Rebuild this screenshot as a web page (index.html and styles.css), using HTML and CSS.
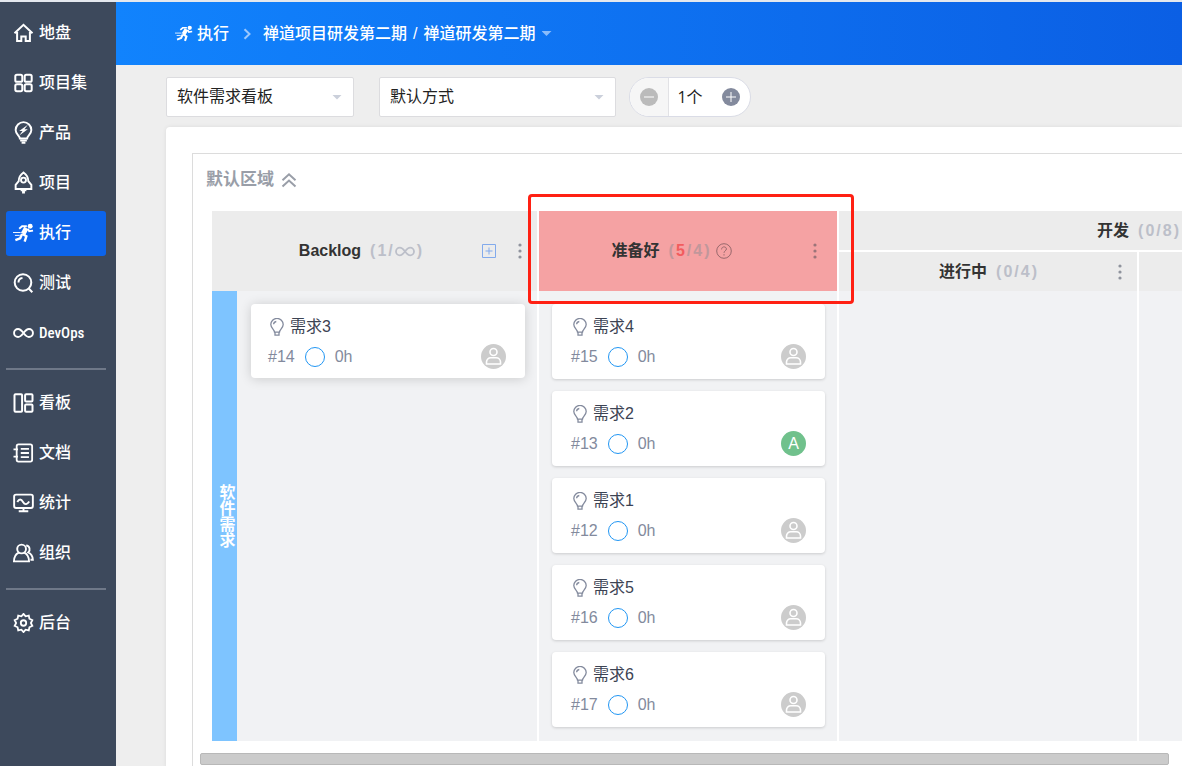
FILE: index.html
```html
<!DOCTYPE html>
<html lang="zh-CN">
<head>
    <meta charset="UTF-8">
    <meta name="viewport" content="width=device-width, initial-scale=1.0">
    <title>软件需求看板</title>
    <link rel="stylesheet" href="styles.css">
</head>
<body>
    <!-- Icon set -->
    <svg class="sprite" aria-hidden="true">
        <symbol id="i-home" viewBox="0 0 20 20"><path d="M1 10.2 10 1.8l9 8.4M3.6 9v9h4.2v-4.6h4.4V18h4.2V9"/></symbol>
        <symbol id="i-grid" viewBox="0 0 20 20"><rect x="1.8" y="1.8" width="7" height="7" rx="1.6"/><rect x="11.2" y="1.8" width="7" height="7" rx="1.6"/><rect x="1.8" y="11.2" width="7" height="7" rx="1.6"/><rect x="11.2" y="11.2" width="7" height="7" rx="1.6"/></symbol>
        <symbol id="i-product" viewBox="0 0 20 24"><path d="M6.2 18.2C6.2 15.5 1.8 14 1.8 9.4a8.2 8.2 0 0 1 16.4 0c0 4.600-4.400 6.100-4.400 8.800zM6.500 20.500h7M8 22.700h4"/><path class="solid" d="m14.500 4-9 6.500h3.500l-3.500 4.500 9-6.500h-3.500z"/></symbol>
        <symbol id="i-rocket" viewBox="0 0 20 24"><path d="M10 1.500C6.500 4 5 6.700 5 10.500L1.800 14.500v4.300H18.200v-4.300L15 10.500C15 6.700 13.500 4 10 1.500z"/><circle cx="10" cy="9.500" r="2.600"/><path class="solid" d="M7 18h6v3h-1.500v2.500h-3V21H7z"/></symbol>
        <symbol id="i-run" viewBox="0 0 22 20"><circle class="solid" cx="18" cy="3" r="2.600"/><path d="M6.500 5.500 9.500 3h5M15.500 5.500l1.500 2.700 4-.7"/><path class="torso" d="M14 4.800 10.500 11"/><path class="limb" d="m10 11 4 2.500-1.800 5.500M9.500 11 7.500 15.500 2.500 17.500"/><path class="thin" d="M0 9.500h8M2 12.500h5"/></symbol>
        <symbol id="i-search" viewBox="0 0 20 20"><circle cx="9.500" cy="9.500" r="8.300"/><path d="m14.800 15 4 4.200M5 9.500A4.500 4.500 0 0 1 9 5"/></symbol>
        <symbol id="i-loop" viewBox="0 0 22 12"><path d="M11 6C8.500 2.700 7.200 1.800 5.300 1.800a4.200 4.200 0 0 0 0 8.400C7.200 10.200 8.500 9.300 11 6s3.800-4.200 5.700-4.200a4.200 4.200 0 0 1 0 8.400C14.800 10.200 13.500 9.300 11 6z"/></symbol>
        <symbol id="i-kanban" viewBox="0 0 20 20"><rect x="1" y="1.200" width="7.600" height="17.600" rx="1"/><rect x="11.600" y="1.200" width="7.400" height="7.300" rx="1"/><rect x="11.600" y="11.500" width="7.400" height="7.300" rx="1"/></symbol>
        <symbol id="i-doc" viewBox="0 0 22 22"><rect x="3.500" y="1.500" width="17" height="19" rx="2"/><path d="M0 7h5M0 15h5M8 6.500h9M8 11h9M8 15.500h9"/></symbol>
        <symbol id="i-stats" viewBox="0 0 22 20"><rect x="1.200" y="1.200" width="19.600" height="14" rx="2"/><path d="M4.500 9c2-3.500 4-3.500 6 0s4.500 2.500 6.500-.5M11 15v3M6 18.600h10"/></symbol>
        <symbol id="i-team" viewBox="0 0 22 20"><circle cx="9" cy="5.800" r="4.600"/><path d="M6 9.600C2.800 11.200 1 14 1 18.800h15.800c0-4.800-1.800-7.600-5-9.200M13.800 2.200c3.700.3 4.800 4.700 2.200 7.200 3 1.500 4.600 4 4.800 7.600h-2.500"/></symbol>
        <symbol id="i-gear" viewBox="0 0 22 22"><path d="m11 1 2.300 2.600 3.500-.700.700 3.400 3.200 1.600L19.100 11l1.600 3.100-3.200 1.600-.700 3.400-3.500-.700L11 21l-2.300-2.600-3.500.700-.7-3.400-3.200-1.600L2.900 11 1.300 7.900l3.200-1.600.7-3.400 3.500.7z"/><circle cx="11" cy="11" r="3"/></symbol>
        <symbol id="i-bulb" viewBox="0 0 14 18"><path d="M4.500 14.200C4.500 11.500.8 10 .8 6.600a6.200 6.200 0 0 1 12.400 0c0 3.400-3.700 4.900-3.700 7.600zM5 14.500v2.700h4v-2.700M3.600 6.300A3.200 3.200 0 0 1 6.300 3.500"/></symbol>
        <symbol id="i-user" viewBox="0 0 25 25"><circle cx="12.500" cy="8" r="3.500"/><path d="M5.500 20v-2a4.300 4.300 0 0 1 4.300-4.300h5.400a4.300 4.300 0 0 1 4.300 4.300v2z"/></symbol>
        <symbol id="i-dots" viewBox="0 0 4 16"><circle class="solid" cx="2" cy="2" r="1.600"/><circle class="solid" cx="2" cy="8" r="1.600"/><circle class="solid" cx="2" cy="14" r="1.600"/></symbol>
        <symbol id="i-plus" viewBox="0 0 16 16"><path d="M1.500 1.500h13v13h-13zM8 4.500v7M4.500 8h7"/></symbol>
        <symbol id="i-help" viewBox="0 0 16 16"><circle cx="8" cy="8" r="7.300"/><path d="M5.600 6.400C5.600 3 10.400 3.200 10.400 6c0 1.800-2.400 1.900-2.400 3.800M8 11.200v1.300"/></symbol>
        <symbol id="i-up" viewBox="0 0 16 16"><path d="m1.500 8.300 6.500-6 6.500 6M1.500 14.500l6.500-6 6.500 6"/></symbol>
        <symbol id="i-next" viewBox="0 0 8 12"><path d="m1.500 1.200 5 4.800-5 4.800"/></symbol>
    </svg>

    <div class="app">
        <nav class="sidebar">
            <a class="nav-item" href="#"><svg class="icon"><use href="#i-home"/></svg>地盘</a>
            <a class="nav-item" href="#"><svg class="icon"><use href="#i-grid"/></svg>项目集</a>
            <a class="nav-item" href="#"><svg class="icon tall"><use href="#i-product"/></svg>产品</a>
            <a class="nav-item" href="#"><svg class="icon tall"><use href="#i-rocket"/></svg>项目</a>
            <a class="nav-item active" href="#"><svg class="icon"><use href="#i-run"/></svg>执行</a>
            <a class="nav-item" href="#"><svg class="icon"><use href="#i-search"/></svg>测试</a>
            <a class="nav-item latin" href="#"><svg class="icon"><use href="#i-loop"/></svg>DevOps</a>
            <hr class="divider">
            <a class="nav-item" href="#"><svg class="icon"><use href="#i-kanban"/></svg>看板</a>
            <a class="nav-item" href="#"><svg class="icon"><use href="#i-doc"/></svg>文档</a>
            <a class="nav-item" href="#"><svg class="icon"><use href="#i-stats"/></svg>统计</a>
            <a class="nav-item" href="#"><svg class="icon"><use href="#i-team"/></svg>组织</a>
            <hr class="divider">
            <a class="nav-item" href="#"><svg class="icon"><use href="#i-gear"/></svg>后台</a>
        </nav>

        <div class="main">
            <header class="header">
                <a class="crumb" href="#"><svg class="crumb-icon"><use href="#i-run"/></svg>执行</a>
                <svg class="crumb-arrow"><use href="#i-next"/></svg>
                <button class="crumb-menu" type="button"><span>禅道项目研发第二期</span><span>/</span><span>禅道研发第二期</span><span class="caret"></span></button>
            </header>

            <div class="toolbar">
                <div class="picker">
                    <select class="picker-type" aria-label="看板类型">
                        <option>软件需求看板</option>
                    </select>
                    <span class="caret"></span>
                </div>
                <div class="picker">
                    <select class="picker-group" aria-label="分组方式">
                        <option>默认方式</option>
                    </select>
                    <span class="caret"></span>
                </div>
                <div class="stepper">
                    <button class="step" type="button" aria-label="减少" disabled><svg class="step-icon" viewBox="0 0 18 18"><circle cx="9" cy="9" r="9"/><path d="M4 9h10"/></svg></button>
                    <span class="step-value">1个</span>
                    <button class="step" type="button" aria-label="增加"><svg class="step-icon" viewBox="0 0 18 18"><circle cx="9" cy="9" r="9"/><path d="M4 9h10M9 4v10"/></svg></button>
                </div>
            </div>

            <main class="panel">
                <section class="region">
                    <h2 class="region-title">默认区域 <svg class="region-icon"><use href="#i-up"/></svg></h2>

                    <div class="board">
                        <div class="board-head">
                            <div class="col-head first">
                                <div class="col-title">Backlog
                                    <span class="count"><span>(</span><span>1</span><span>/</span><svg class="infinite"><use href="#i-loop"/></svg><span>)</span></span>
                                </div>
                                <button class="col-btn add" type="button" aria-label="添加"><svg><use href="#i-plus"/></svg></button>
                                <button class="col-btn" type="button" aria-label="更多"><svg class="dots"><use href="#i-dots"/></svg></button>
                            </div>
                            <div class="col-head over">
                                <div class="col-title">准备好
                                    <span class="count"><span>(</span><span class="exceed">5</span><span>/</span><span>4</span><span>)</span></span>
                                    <svg class="help"><use href="#i-help"/></svg>
                                </div>
                                <button class="col-btn" type="button" aria-label="更多"><svg class="dots"><use href="#i-dots"/></svg></button>
                                <div class="highlight"></div>
                            </div>
                            <div class="col-group">
                                <div class="col-head parent">
                                    <div class="col-title">开发
                                        <span class="count"><span>(</span><span>0</span><span>/</span><span>8</span><span>)</span></span>
                                    </div>
                                </div>
                                <div class="col-children">
                                    <div class="col-head">
                                        <div class="col-title">进行中
                                            <span class="count"><span>(</span><span>0</span><span>/</span><span>4</span><span>)</span></span>
                                        </div>
                                        <button class="col-btn" type="button" aria-label="更多"><svg class="dots"><use href="#i-dots"/></svg></button>
                                    </div>
                                    <div class="col-head"></div>
                                </div>
                            </div>
                        </div>

                        <div class="board-body">
                            <div class="lane">软件需求</div>
                            <div class="column">
                                <article class="card raised">
                                    <a class="card-title" href="#"><svg class="bulb"><use href="#i-bulb"/></svg>需求3</a>
                                    <div class="card-info"><span>#14</span><span class="ring"></span><span>0h</span><span class="avatar"><svg><use href="#i-user"/></svg></span></div>
                                </article>
                            </div>
                            <div class="column">
                                <article class="card">
                                    <a class="card-title" href="#"><svg class="bulb"><use href="#i-bulb"/></svg>需求4</a>
                                    <div class="card-info"><span>#15</span><span class="ring"></span><span>0h</span><span class="avatar"><svg><use href="#i-user"/></svg></span></div>
                                </article>
                                <article class="card">
                                    <a class="card-title" href="#"><svg class="bulb"><use href="#i-bulb"/></svg>需求2</a>
                                    <div class="card-info"><span>#13</span><span class="ring"></span><span>0h</span><span class="avatar green">A</span></div>
                                </article>
                                <article class="card">
                                    <a class="card-title" href="#"><svg class="bulb"><use href="#i-bulb"/></svg>需求1</a>
                                    <div class="card-info"><span>#12</span><span class="ring"></span><span>0h</span><span class="avatar"><svg><use href="#i-user"/></svg></span></div>
                                </article>
                                <article class="card">
                                    <a class="card-title" href="#"><svg class="bulb"><use href="#i-bulb"/></svg>需求5</a>
                                    <div class="card-info"><span>#16</span><span class="ring"></span><span>0h</span><span class="avatar"><svg><use href="#i-user"/></svg></span></div>
                                </article>
                                <article class="card">
                                    <a class="card-title" href="#"><svg class="bulb"><use href="#i-bulb"/></svg>需求6</a>
                                    <div class="card-info"><span>#17</span><span class="ring"></span><span>0h</span><span class="avatar"><svg><use href="#i-user"/></svg></span></div>
                                </article>
                            </div>
                            <div class="column"></div>
                            <div class="column"></div>
                        </div>
                    </div>
                    <div class="scrollbar"></div>
                </section>
            </main>
        </div>
    </div>
</body>
</html>
```

FILE: styles.css
```css
* {
    box-sizing: border-box;
}
body {
    margin: 0;
    border-top: 2px solid #e4e8ee;
    background-color: #eee;
    color: #3c4353;
    font: 16px/24px "Liberation Sans", "Noto Sans CJK SC", sans-serif;
    overflow: hidden;
}
a {
    color: inherit;
    text-decoration: none;
}
button {
    padding: 0;
    border: none;
    background: none;
    color: inherit;
    font: inherit;
}
svg {
    display: block;
    fill: none;
    stroke: currentColor;
    stroke-width: 2;
}
.sprite {
    position: absolute;
    width: 0;
    height: 0;
}
.solid {
    fill: currentColor;
    stroke: none;
}
.thin {
    stroke-width: 1;
}
.torso {
    stroke-width: 5;
}
.limb {
    stroke-width: 2.5;
}
.caret {
    width: 10px;
    height: 5px;
    background-color: #cbd0db;
    clip-path: polygon(0 0, 100% 0, 50% 100%);
}
.app {
    display: flex;
    min-height: 100vh;
}

/* Sidebar */
.sidebar {
    flex: none;
    width: 116px;
    padding: 9px 10px 0 6px;
    background-color: #3d495c;
    color: #fff;
}
.nav-item {
    display: flex;
    align-items: center;
    gap: 5px;
    height: 45px;
    margin-bottom: 5px;
    padding: 0 0 2px 7px;
    border-radius: 3px;
    font-weight: 500;
}
.nav-item.active {
    background-color: #0c64eb;
}
.nav-item.latin {
    font-family: "Liberation Sans Narrow", "Roboto Condensed", "Open Sans Condensed", Roboto, sans-serif;
    font-size: 15px;
}
.icon {
    flex: none;
    width: 21px;
    height: 20px;
}
.icon.tall {
    height: 23px;
}
.divider {
    height: 2px;
    margin: 12px 0 11px;
    border: none;
    background-color: #6f7888;
}

/* Header */
.main {
    flex: 1;
    min-width: 0;
    display: flex;
    flex-direction: column;
}
.header {
    display: flex;
    align-items: center;
    height: 63px;
    padding-left: 59px;
    background: linear-gradient(to right, #1183fd, #0b5fe4);
    color: #fff;
    font-weight: 500;
}
.crumb {
    display: flex;
    align-items: center;
    gap: 4px;
}
.crumb-icon {
    width: 18px;
    height: 17px;
}
.crumb-arrow {
    width: 8px;
    height: 12px;
    margin: 0 12px 0 14px;
    color: #9cc8fd;
}
.crumb-menu {
    display: flex;
    align-items: center;
    gap: 6px;
}
.crumb-menu .caret {
    background-color: #8abcfb;
}

/* Toolbar */
.toolbar {
    display: flex;
    padding: 12px 0 10px 50px;
    color: #222;
}
.picker {
    display: flex;
    align-items: center;
    margin-right: 25px;
    position: relative;
}
.picker + .picker {
    margin-right: 13px;
}
.picker select {
    appearance: none;
    height: 40px;
    padding: 0 24px 0 10px;
    border: 1px solid #dcdcdf;
    border-radius: 2px;
    background-color: #fff;
    color: inherit;
    font: inherit;
}
.picker-type {
    width: 188px;
}
.picker-group {
    width: 237px;
}
.picker .caret {
    position: absolute;
    right: 12px;
    pointer-events: none;
}
.stepper {
    display: flex;
    align-items: center;
    height: 40px;
    border: 1px solid #dadce6;
    border-radius: 20px;
    background-color: #fff;
    overflow: hidden;
}
.step {
    display: flex;
    align-items: center;
    justify-content: center;
    width: 39px;
    height: 100%;
    color: #838a9d;
}
.step:disabled {
    border-right: 1px solid #e2e2e5;
    background-color: #f6f6f6;
    color: #bbb;
}
.step-value {
    width: 42px;
    font-family: "Open Sans", "Noto Sans CJK SC", sans-serif;
    text-align: center;
}
.step-icon {
    width: 18px;
    height: 18px;
    stroke: #fff;
    stroke-width: 1;
}
.step-icon circle {
    fill: currentColor;
    stroke: none;
}

/* Board */
.panel {
    flex: 1;
    margin-left: 50px;
    padding: 26px 0 0 26px;
    border-top-left-radius: 4px;
    background-color: #fff;
    box-shadow: 0 0 4px rgba(0, 0, 0, 0.08);
}
.region {
    border: 1px solid #dcdcdc;
    border-width: 1px 0 0 1px;
    overflow: hidden;
}
.region-title {
    display: flex;
    align-items: center;
    gap: 7px;
    height: 50px;
    margin: 0;
    padding: 2px 0 0 13px;
    color: #999ea8;
    font-size: 17px;
}
.region-icon {
    width: 16px;
    height: 16px;
}
.board {
    width: max-content;
    padding: 7px 0 0 19px;
}
.board-head,
.board-body,
.col-children {
    display: flex;
}
.board-head {
    height: 80px;
}
.board-body {
    min-height: 450px;
}
.col-head {
    display: flex;
    align-items: center;
    width: 300px;
    padding-left: 34px;
    border-left: 2px solid #fff;
    background-color: #ececec;
}
.col-head.first {
    width: 325px;
    border-left: none;
}
.col-head.over {
    position: relative;
    padding: 0 5px 0 7px;
    background-color: #f5a2a3;
}
.col-group {
    display: flex;
    flex-direction: column;
    gap: 2px;
}
.col-group .col-head {
    height: 39px;
}
.col-head.parent {
    width: 600px;
    padding-left: 0;
}
.col-title {
    display: flex;
    align-items: center;
    justify-content: center;
    flex: 1;
    color: #333;
    font-weight: bold;
}
.count {
    display: flex;
    align-items: center;
    gap: 2px;
    margin-left: 9px;
    color: #bcbfc9;
}
.over .count {
    color: #c1979b;
}
.over .exceed {
    color: #f25c5e;
}
.infinite {
    width: 20px;
    height: 11px;
}
.help {
    width: 16px;
    height: 16px;
    margin-left: 7px;
    color: #98686c;
    stroke-width: 1;
}
.col-btn {
    display: flex;
    justify-content: center;
    width: 34px;
    color: #8f939d;
}
.col-btn.add {
    width: 28px;
    color: #82aaec;
}
.col-btn.add svg {
    width: 16px;
    height: 16px;
    stroke-width: 1;
}
.dots {
    width: 4px;
    height: 16px;
}
.over .dots {
    color: #9c7479;
}
.highlight {
    position: absolute;
    z-index: 1;
    inset: -17px -17px -13px -11px;
    border: 3px solid #ff2013;
    border-radius: 4px;
    pointer-events: none;
}
.lane {
    display: flex;
    align-items: center;
    justify-content: center;
    width: 25px;
    padding-left: 2px;
    background-color: #7ec4ff;
    color: #fff;
    font-weight: bold;
    line-height: 20px;
    writing-mode: vertical-rl;
}
.column {
    display: flex;
    flex-direction: column;
    gap: 12px;
    width: 300px;
    padding: 13px 12px 14px 13px;
    border-left: 2px solid #fff;
    background-color: #f1f2f4;
}
.lane + .column {
    padding-left: 14px;
    border-left: none;
}
.card {
    height: 75px;
    padding: 11px 19px 0;
    border-radius: 4px;
    background-color: #fff;
    box-shadow: 0 1px 3px rgba(0, 0, 0, 0.16);
}
.card.raised {
    height: 74px;
    padding-left: 17px;
    box-shadow: 0 1px 12px rgba(0, 0, 0, 0.16);
}
.card-title {
    display: flex;
    align-items: center;
    gap: 6px;
    padding-left: 2px;
}
.bulb {
    width: 14px;
    height: 18px;
    color: #838a9d;
    stroke-width: 1.3;
}
.card-info {
    display: flex;
    align-items: center;
    gap: 10px;
    margin-top: 5px;
    color: #838a9d;
}
.ring {
    width: 20px;
    height: 20px;
    border: 1px solid #2196f3;
    border-radius: 50%;
}
.avatar {
    width: 25px;
    height: 25px;
    margin-left: auto;
    border-radius: 50%;
    background-color: #ccc;
    color: #fff;
    line-height: 25px;
    text-align: center;
}
.avatar svg {
    width: 25px;
    height: 25px;
    stroke-width: 1.6;
}
.avatar.green {
    background-color: #70c18c;
}
.scrollbar {
    height: 12px;
    margin: 12px 13px 2px 7px;
    border: 1px solid #b8b8b8;
    border-radius: 2px;
    background-color: #cbcbcb;
}
```
